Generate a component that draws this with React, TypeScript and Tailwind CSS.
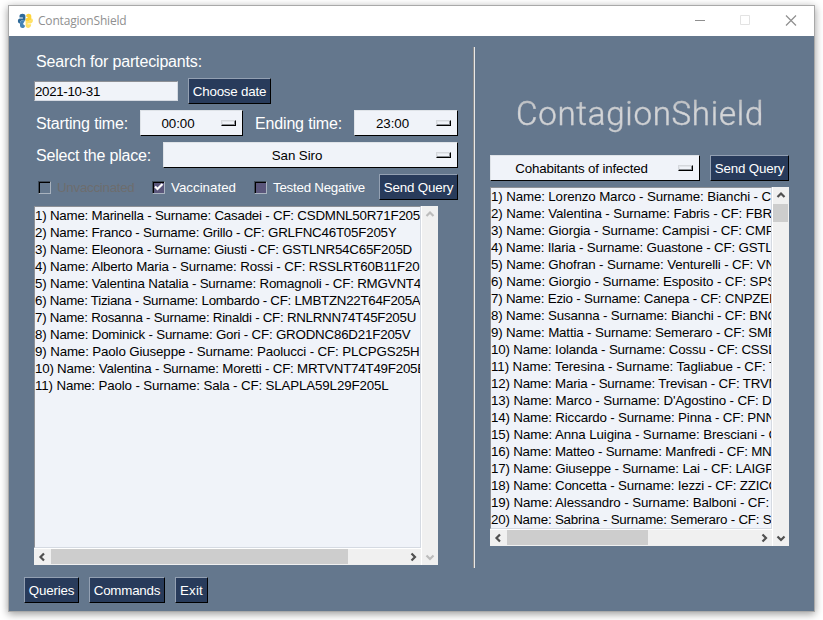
import React, { useLayoutEffect, useRef } from "react";

type Row = [text: string, width: number];

const people: Row[] = [
  ["1) Name: Marinella - Surname: Casadei - CF: CSDMNL50R71F205", 385],
  ["2) Name: Franco - Surname: Grillo - CF: GRLFNC46T05F205Y", 361.5],
  ["3) Name: Eleonora - Surname: Giusti - CF: GSTLNR54C65F205D", 377],
  ["4) Name: Alberto Maria - Surname: Rossi - CF: RSSLRT60B11F20", 384.5],
  ["5) Name: Valentina Natalia - Surname: Romagnoli - CF: RMGVNT4", 386],
  ["6) Name: Tiziana - Surname: Lombardo - CF: LMBTZN22T64F205A", 385.5],
  ["7) Name: Rosanna - Surname: Rinaldi - CF: RNLRNN74T45F205U", 381],
  ["8) Name: Dominick - Surname: Gori - CF: GRODNC86D21F205V", 375.5],
  ["9) Name: Paolo Giuseppe - Surname: Paolucci - CF: PLCPGS25H", 384.5],
  ["10) Name: Valentina - Surname: Moretti - CF: MRTVNT74T49F205E", 391],
  ["11) Name: Paolo - Surname: Sala - CF: SLAPLA59L29F205L", 353.5],
];

const cohabitants: Row[] = [
  ["1) Name: Lorenzo Marco - Surname: Bianchi - CF", 288],
  ["2) Name: Valentina - Surname: Fabris - CF: FBR", 281],
  ["3) Name: Giorgia - Surname: Campisi - CF: CMP", 283.5],
  ["4) Name: Ilaria - Surname: Guastone - CF: GSTL", 281.5],
  ["5) Name: Ghofran - Surname: Venturelli - CF: VN", 284],
  ["6) Name: Giorgio - Surname: Esposito - CF: SPS", 285],
  ["7) Name: Ezio - Surname: Canepa - CF: CNPZEI", 281.5],
  ["8) Name: Susanna - Surname: Bianchi - CF: BNC", 286],
  ["9) Name: Mattia - Surname: Semeraro - CF: SMR", 286.5],
  ["10) Name: Iolanda - Surname: Cossu - CF: CSSL", 284.5],
  ["11) Name: Teresina - Surname: Tagliabue - CF: T", 286],
  ["12) Name: Maria - Surname: Trevisan - CF: TRVM", 288.5],
  ["13) Name: Marco - Surname: D'Agostino - CF: D", 280.5],
  ["14) Name: Riccardo - Surname: Pinna - CF: PNN", 284],
  ["15) Name: Anna Luigina - Surname: Bresciani - C", 287],
  ["16) Name: Matteo - Surname: Manfredi - CF: MN", 280.5],
  ["17) Name: Giuseppe - Surname: Lai - CF: LAIGP", 283],
  ["18) Name: Concetta - Surname: Iezzi - CF: ZZICC", 287],
  ["19) Name: Alessandro - Surname: Balboni - CF:", 278],
  ["20) Name: Sabrina - Surname: Semeraro - CF: S", 280.5],
];

/* A line of text tracked so that it is exactly `width` pixels long. */
function Fit({ text, width }: { text: string; width: number }) {
  const ref = useRef<HTMLSpanElement>(null);
  useLayoutEffect(() => {
    const el = ref.current;
    if (!el) return;
    el.style.letterSpacing = "0px";
    el.style.letterSpacing = `${(width - el.getBoundingClientRect().width) / text.length}px`;
  }, [text, width]);
  return <span ref={ref} className="inline-block whitespace-pre">{text}</span>;
}

function Button({ text, textWidth, className }: { text: string; textWidth: number; className: string }) {
  return (
    <button
      className={`h-[26px] shrink-0 whitespace-nowrap border border-t-[#93a0b2] border-l-[#93a0b2] border-r-black border-b-black bg-[#283b5b] text-center text-[13.33px] leading-[25px] text-white ${className}`}
    >
      <Fit text={text} width={textWidth} />
    </button>
  );
}

function Dropdown({ value, textWidth, className }: { value: string; textWidth: number; className: string }) {
  return (
    <div
      className={`flex h-[26px] shrink-0 items-center border border-t-[#dfe3e8] border-l-[#dfe3e8] border-r-black border-b-black bg-[#f0f3f9] pr-[6px] text-[13.33px] text-black ${className}`}
    >
      <span className="flex-1 whitespace-nowrap pr-[6px] pt-[2px] text-center leading-[24px]">
        <Fit text={value} width={textWidth} />
      </span>
      <span className="h-[6px] w-[15px] border border-t-[#d5d8dd] border-l-[#d5d8dd] border-r-black border-b-black shadow-[inset_-1px_-1px_0_#8c8f94,inset_1px_1px_0_#e3e6eb]" />
    </div>
  );
}

function Check({ label, textWidth, checked, disabled, className }: { label: string; textWidth: number; checked?: boolean; disabled?: boolean; className: string }) {
  return (
    <label className={`flex shrink-0 items-center gap-[6px] whitespace-nowrap text-[13.33px] ${disabled ? "text-[#6d6d6d]" : "text-white"} ${className}`}>
      <span
        className={`block h-[13px] w-[13px] border border-t-[#3f4b59] border-l-[#3f4b59] border-r-[#a9b3bf] border-b-[#a9b3bf] shadow-[inset_1px_1px_0_#000] ${disabled ? "bg-[#64778d]" : "bg-[#5a567b]"}`}
      >
        {checked && (
          <svg viewBox="0 0 11 11" width="11" height="11" fill="none" stroke="white" strokeWidth="2.2">
            <path d="M2 4.500 4.500 7 9.500 2" />
          </svg>
        )}
      </span>
      <span className="pt-px">
        <Fit text={label} width={textWidth} />
      </span>
    </label>
  );
}

const arrows = { left: "M10 4.5 6.5 8 10 11.5", right: "M6.5 4.5 10 8 6.5 11.5", up: "M4.5 10 8 6.5 11.5 10", down: "M4.5 6.5 8 10 11.5 6.5" };

function Arrow({ dir, off }: { dir: keyof typeof arrows; off?: boolean }) {
  return (
    <svg className="block shrink-0" width="16" height="16" viewBox="0 0 16 16" fill="none" stroke={off ? "#bcbcbc" : "#505050"} strokeWidth="2.2">
      <path d={arrows[dir]} />
    </svg>
  );
}

function ListBox({ rows, className, thumb, scrollable }: { rows: Row[]; className: string; thumb: string; scrollable?: boolean }) {
  return (
    <div className={`flex h-[359px] bg-white ${className}`}>
      <div className="flex min-w-0 flex-1 flex-col">
        <div className="h-[342px] overflow-hidden border border-t-[#8d9096] border-l-[#8d9096] border-r-[#d5dae2] border-b-[#d5dae2] bg-[#f0f3f9] text-[13.33px] text-black">
          {rows.map(([text, width]) => (
            <div key={text} className="h-[17px] whitespace-pre leading-[17px]">
              <Fit text={text} width={width} />
            </div>
          ))}
        </div>
        <div className="mt-px flex h-[16px] justify-between bg-[#f0f0f0]">
          <Arrow dir="left" />
          <div className="flex flex-1 pl-px">
            <div className={`h-[15px] bg-[#cdcdcd] ${thumb}`} />
          </div>
          <Arrow dir="right" />
        </div>
      </div>
      <div className="ml-px flex w-[16px] flex-col bg-[#f0f0f0]">
        <Arrow dir="up" off={!scrollable} />
        <div className="flex-1 pt-px">{scrollable && <div className="h-[18px] w-[15px] bg-[#cdcdcd]" />}</div>
        <Arrow dir="down" off={!scrollable} />
      </div>
    </div>
  );
}

function SnakeIcon() {
  return (
    <svg width="16" height="16" viewBox="0 0 16 16" className="block">
      <path d="M8.400 7.200V3C8.400-.1 2.500-.1 2.500 3v1.600h3.400v.9H3C.200 5.500.200 10.200 3 10.600c0-2.400 1-3.200 3-3.300Z" fill="#2f6a99" />
      <path d="M8.200 7 5.500 7.300C3.400 7.600 3 9 3 10.800v1.700c0 3.400 4.900 3.200 5 .2l-2-1.700Z" fill="#4484b4" />
      <path d="M9 3.200C9-.1 14.300-.1 14.300 3.100v2C14.300 7.500 13 8 11.400 8.200L8.600 8.800V5.500L11 4.800Z" fill="#ffd43b" />
      <path d="M8.600 9.300C8.800 8 10 8 11.400 7.900c1.400 0 2.900-.7 2.900-2.700 2.300.5 2.200 4.900-.7 5.300h-3v.8h3.600c0 4.700-5.600 4.700-5.600 1.300Z" fill="#ffe166" />
    </svg>
  );
}

export default function App() {
  return (
    <div className="h-[620px] w-[823px] overflow-hidden bg-white pl-[8px] pt-[5px] font-['Liberation_Sans',Arial,sans-serif]">
      <div className="flex h-[607px] w-[807px] flex-col border border-[#a9a9a9] bg-[#64778d] shadow-[0_2px_8px_rgba(0,0,0,0.4)]">
        <header className="flex h-[30px] shrink-0 items-center bg-white pl-[8px]">
          <SnakeIcon />
          <span className="ml-[5px] flex-1 font-['Open_Sans','Noto_Sans',sans-serif] text-[12px] text-[#909090]">
            <Fit text="ContagionShield" width={88.5} />
          </span>
          <svg width="120" height="30" viewBox="0 0 120 30" fill="none" className="mr-[4px]">
            <path d="M5 14.500h10" stroke="#8f8f8f" />
            <path d="M50.500 9.500h9v9h-9z" stroke="#e3e3e3" />
            <path d="m96 9.500 10 10m0-10-10 10" stroke="#8f8f8f" strokeWidth="1.200" />
          </svg>
        </header>
        <div className="flex h-[534px] shrink-0">
          <section className="flex w-[464px] flex-col pl-[25px] pt-[11px] text-white">
            <div className="h-[31px] pl-[2px] text-[16px] leading-[29px]">
              <Fit text="Search for partecipants:" width={166} />
            </div>
            <div className="flex h-[32px] items-start">
              <div className="mt-[3px] h-[20px] w-[144px] border border-t-[#8d9096] border-l-[#8d9096] border-r-[#d5dae2] border-b-[#d5dae2] bg-[#f0f3f9] text-[13.33px] leading-[19px] text-black">
                <Fit text="2021-10-31" width={65} />
              </div>
              <Button text="Choose date" textWidth={73.500} className="ml-[10px] w-[83px]" />
            </div>
            <div className="flex h-[32px] text-[16px] leading-[28px]">
              <span className="w-[106px] shrink-0 pl-[2px]">
                <Fit text="Starting time:" width={92} />
              </span>
              <Dropdown value="00:00" textWidth={33} className="w-[103px]" />
              <span className="w-[111px] shrink-0 pl-[12px]">
                <Fit text="Ending time:" width={87} />
              </span>
              <Dropdown value="23:00" textWidth={33} className="w-[104px]" />
            </div>
            <div className="flex h-[32px] text-[16px] leading-[28px]">
              <span className="w-[129px] shrink-0 pl-[2px]">
                <Fit text="Select the place:" width={115} />
              </span>
              <Dropdown value="San Siro" textWidth={50.500} className="w-[295px]" />
            </div>
            <div className="flex h-[32px]">
              <Check label="Unvaccinated" textWidth={77.500} disabled className="h-[26px] w-[118px] pl-[4px]" />
              <Check label="Vaccinated" textWidth={65} checked className="h-[26px] w-[102px]" />
              <Check label="Tested Negative" textWidth={92} className="h-[26px] w-[125px]" />
              <Button text="Send Query" textWidth={69.500} className="w-[79px]" />
            </div>
            <ListBox rows={people} className="w-[404px]" thumb="w-[297px]" />
          </section>
          <div className="mt-[11px] h-[521px] w-[2px] border-l border-l-[#8e8e8e] bg-[#e8e8e8]" />
          <section className="flex flex-col pl-[15px] pt-[54px]">
            <div className="h-[65px] w-[299px] pl-[26px] pt-px">
              <span className="inline-block bg-linear-to-b from-[#a8abaf] via-[#d8d9db] to-[#c6c8cb] bg-clip-text font-['Roboto','Noto_Sans',sans-serif] text-[33px] font-light leading-[46px] text-transparent [-webkit-text-stroke:0.4px_rgba(205,207,210,0.5)]">
                <Fit text="ContagionShield" width={248} />
              </span>
            </div>
            <div className="flex h-[32px] gap-[10px]">
              <Dropdown value="Cohabitants of infected" textWidth={132.500} className="w-[210px]" />
              <Button text="Send Query" textWidth={69.500} className="w-[79px]" />
            </div>
            <ListBox rows={cohabitants} className="w-[299px]" thumb="w-[141px]" scrollable />
          </section>
        </div>
        <footer className="flex gap-[10px] pl-[15px] pt-[7px]">
          <Button text="Queries" textWidth={45.500} className="w-[55px]" />
          <Button text="Commands" textWidth={66.500} className="w-[76px]" />
          <Button text="Exit" textWidth={23} className="w-[33px]" />
        </footer>
      </div>
    </div>
  );
}
